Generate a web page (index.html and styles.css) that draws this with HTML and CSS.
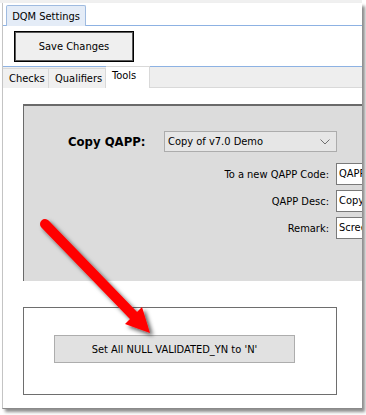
FILE: index.html
```html
<!DOCTYPE html>
<html>
<head>
<meta charset="utf-8">
<link rel="stylesheet" href="styles.css">
</head>
<body>
<div class="frame">
  <div class="topstrip"></div>
  <div class="window">
    <div class="doc-tabs"><div class="doc-tab">DQM Settings</div></div>
    <div class="toolbar"><button class="save-btn">Save Changes</button></div>
    <div class="tabctl">
      <div class="tabs">
        <div class="tab">Checks</div>
        <div class="tab">Qualifiers</div>
        <div class="tab active">Tools</div>
      </div>
      <div class="page">
        <div class="copy-panel">
          <div class="copy-row">
            <span class="copy-label">Copy QAPP:</span>
            <div class="select">
              <span>Copy of v7.0 Demo</span>
              <svg class="chev" width="10" height="6" viewBox="0 0 10 6"><path d="M0.5 0.5 L5 5 L9.5 0.5" fill="none" stroke="#707070" stroke-width="1"/></svg>
            </div>
          </div>
          <div class="fields">
            <label class="flabel">To a new QAPP Code:</label><div class="input">QAPP</div>
            <label class="flabel">QAPP Desc:</label><div class="input">Copy</div>
            <label class="flabel">Remark:</label><div class="input">Screen</div>
          </div>
        </div>
        <div class="null-box">
          <button class="null-btn">Set All NULL VALIDATED_YN to 'N'</button>
        </div>
      </div>
    </div>
  </div>
  <svg class="arrow" width="366" height="415" viewBox="0 0 366 415">
    <defs>
      <filter id="sh" x="-30%" y="-30%" width="160%" height="160%">
        <feDropShadow dx="3" dy="3" stdDeviation="2" flood-color="#000" flood-opacity="0.65"/>
      </filter>
    </defs>
    <g filter="url(#sh)">
      <line x1="45" y1="224" x2="134" y2="316" stroke="#ff0000" stroke-width="10" stroke-linecap="round"/>
      <polygon points="150,333 142,307 125,324" fill="#ff0000"/>
    </g>
  </svg>
</div>
</body>
</html>
```

FILE: styles.css
```css
html, body {
  margin: 0;
  padding: 0;
  background: #ffffff;
}
body {
  font-family: "DejaVu Sans Condensed", "Liberation Sans", sans-serif;
  font-size: 11px;
  color: #000;
}
.frame {
  position: relative;
  width: 366px;
  height: 415px;
  overflow: hidden;
}
.topstrip {
  width: 362px;
  height: 3px;
  background: #f0f0f0;
}
.window {
  margin-left: 2px;
  width: 359px;
  height: 405px;
  border-left: 1px solid #c4c4c4;
  border-bottom: 1px solid #8a8a8a;
  background: #fff;
  box-shadow: 3px 3px 3px rgba(0,0,0,0.45);
  display: flex;
  flex-direction: column;
  overflow: hidden;
}
.doc-tabs {
  border-bottom: 1px solid #8db2e3;
  display: flex;
  align-items: flex-end;
  padding-left: 3px;
  box-sizing: border-box;
  height: 23px;
}
.doc-tab {
  width: 80px;
  height: 21px;
  box-sizing: border-box;
  border: 1px solid #9fbbe0;
  border-bottom: none;
  border-radius: 2px 2px 0 0;
  background: #e4ecf7;
  text-align: center;
  line-height: 21px;
  margin-bottom: -1px;
}
.toolbar {
  height: 41px;
  border-bottom: 1px solid #8db2e3;
  box-sizing: border-box;
  padding: 5px 0 0 11px;
}
.save-btn {
  width: 120px;
  height: 31px;
  border: 1px solid #000;
  box-shadow: inset 0 0 0 1px #5a5a5a;
  background: #efefef;
  font: inherit;
  color: #000;
  padding: 0;
}
.tabctl {
  flex: 1;
  display: flex;
  flex-direction: column;
}
.tabs {
  height: 21px;
  background: #eeeeee;
  border-bottom: 1px solid #d9d9d9;
  box-sizing: border-box;
  display: flex;
  align-items: flex-end;
}
.tab {
  height: 20px;
  box-sizing: border-box;
  border: 1px solid #d9d9d9;
  border-bottom: none;
  border-left: none;
  background: #f0f0f0;
  padding: 0 6px;
  line-height: 20px;
  margin-bottom: -1px;
}
.tab:first-child {
  width: 46px;
}
.tab:nth-child(2) {
  width: 57px;
}
.tab.active {
  background: #fff;
  height: 22px;
  width: 44px;
  line-height: 18px;
}
.page {
  flex: 1;
  background: #fff;
  padding: 16px 0 0 20px;
}
.copy-panel {
  width: 400px;
  height: 177px;
  box-sizing: border-box;
  background: #dcdcdc;
  border-top: 2px solid #6a6a6a;
  border-left: 1px solid #6a6a6a;
  padding: 25px 0 0 44px;
}
.copy-row {
  display: flex;
  align-items: center;
  height: 21px;
}
.copy-label {
  font-weight: bold;
  font-size: 13px;
  width: 96px;
}
.select {
  width: 173px;
  height: 21px;
  box-sizing: border-box;
  border: 1px solid #acacac;
  background: #e6e6e6;
  display: flex;
  align-items: center;
  justify-content: space-between;
  padding: 0 6px 0 3px;
}
.fields {
  display: grid;
  grid-template-columns: 305px 60px;
  column-gap: 7px;
  row-gap: 5px;
  margin-top: 11px;
  margin-left: -44px;
  align-items: center;
}
.flabel {
  text-align: right;
}
.input {
  height: 22px;
  box-sizing: border-box;
  border: 1px solid #7a7a7a;
  background: #fff;
  padding: 0 2px;
  line-height: 20px;
}
.null-box {
  margin-top: 26px;
  width: 314px;
  height: 88px;
  box-sizing: border-box;
  border: 1px solid #6e6e6e;
  padding: 27px 0 0 30px;
}
.null-btn {
  width: 241px;
  height: 28px;
  border: 1px solid #adadad;
  background: #e1e1e1;
  font: inherit;
  color: #000;
  padding: 0;
}
.arrow {
  position: absolute;
  left: 0;
  top: 0;
  pointer-events: none;
}
```
